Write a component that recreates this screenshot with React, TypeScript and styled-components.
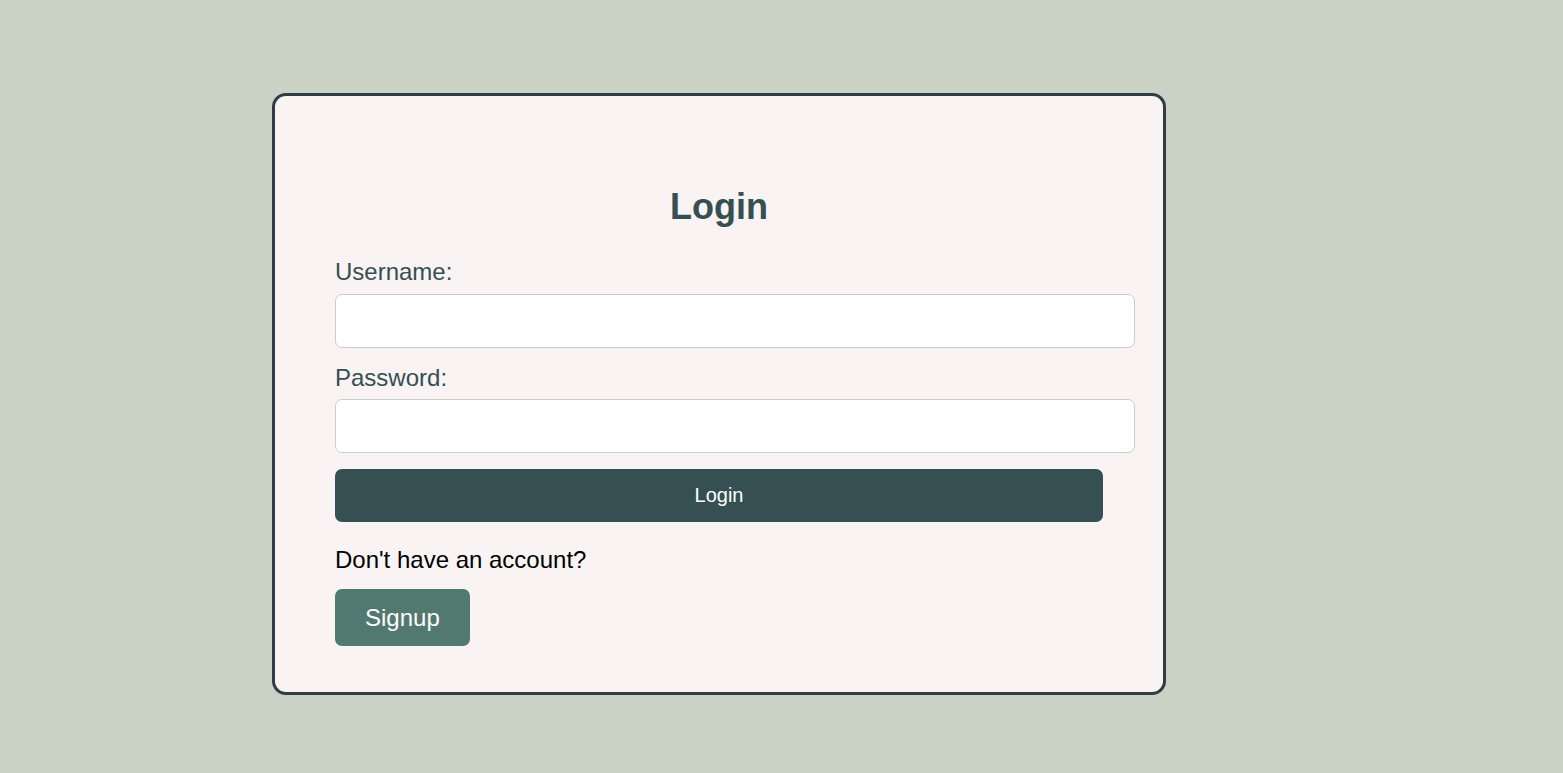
import React from "react";
import styled, { createGlobalStyle } from "styled-components";

const GlobalStyle = createGlobalStyle`
  html, body {
    margin: 0;
    padding: 0;
    background: #cad2c5;
    font-family: "Liberation Sans", Arial, sans-serif;
  }
  * { box-sizing: border-box; }
`;

const Page = styled.div`
  min-height: 773px;
  padding: 93px 0 0 272px;
  background: #cad2c5;
`;

const Card = styled.div`
  width: 894px;
  height: 602px;
  border: 3px solid #2f3e46;
  border-radius: 14px;
  background: #f9f3f3;
  padding: 90px 60px 0 60px;
  display: flex;
  flex-direction: column;
  align-items: flex-start;
`;

const Title = styled.h2`
  margin: 0 0 30px 0;
  width: 100%;
  text-align: center;
  font-size: 36px;
  font-weight: bold;
  line-height: normal;
  color: #354f52;
`;

const Field = styled.div<{ $gap: number }>`
  display: flex;
  flex-direction: column;
  width: 100%;
  margin-bottom: ${(p) => p.$gap}px;
`;

const Label = styled.label`
  font-size: 24px;
  line-height: normal;
  color: #354f52;
  margin-bottom: 7.5px;
`;

const Input = styled.input`
  width: calc(100% + 32px);
  height: 54px;
  border: 1px solid #cccccc;
  border-radius: 7px;
  background: #ffffff;
  padding: 0 15px;
  font-size: 20px;
  font-family: inherit;
  outline: none;
`;

const PrimaryButton = styled.button`
  width: 100%;
  height: 53px;
  border: none;
  border-radius: 7px;
  background: #354f52;
  color: #ffffff;
  font-family: "Liberation Sans", Arial, sans-serif;
  font-size: 20px;
  cursor: pointer;
  margin-bottom: 24px;
`;

const Prompt = styled.p`
  margin: 0 0 15px 0;
  font-size: 24px;
  line-height: normal;
  color: #000000;
`;

const SecondaryButton = styled.button`
  height: 57px;
  padding: 0 30px;
  border: none;
  border-radius: 7px;
  background: #52796f;
  color: #ffffff;
  font-family: "Liberation Sans", Arial, sans-serif;
  font-size: 24px;
  cursor: pointer;
`;

export default function App() {
  return (
    <>
      <GlobalStyle />
      <Page>
        <Card>
          <Title>Login</Title>
          <Field $gap={16}>
            <Label htmlFor="username">Username:</Label>
            <Input id="username" type="text" />
          </Field>
          <Field $gap={16}>
            <Label htmlFor="password">Password:</Label>
            <Input id="password" type="password" />
          </Field>
          <PrimaryButton>Login</PrimaryButton>
          <Prompt>Don't have an account?</Prompt>
          <SecondaryButton>Signup</SecondaryButton>
        </Card>
      </Page>
    </>
  );
}
